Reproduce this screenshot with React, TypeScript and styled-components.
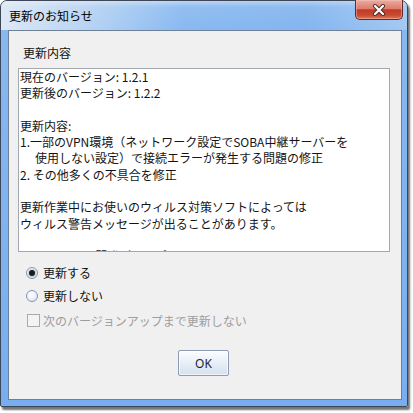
import React from "react";
import styled, { createGlobalStyle } from "styled-components";

const GlobalStyle = createGlobalStyle`
  html, body {
    margin: 0;
    padding: 0;
    background: #ffffff;
  }
  body {
    font-family: "Noto Sans CJK JP", "Noto Sans", sans-serif;
  }
`;

const Page = styled.div`
  width: 413px;
  height: 413px;
  background: #ffffff;
  overflow: hidden;
`;

const Frame = styled.div`
  box-sizing: border-box;
  width: 408px;
  height: 407px;
  display: flex;
  flex-direction: column;
  padding: 0 5px 6px 7px;
  border: 1px solid #3d4757;
  border-radius: 7px 7px 2px 2px;
  background: linear-gradient(
    to bottom,
    #c9ddf4 0px,
    #94c0f1 6px,
    #86b8f1 30px,
    #7fb3ef 60%,
    #78aef0 100%
  );
  box-shadow: 2px 3px 2px rgba(0, 0, 0, 0.55);
`;

const TitleBar = styled.div`
  height: 29px;
  display: flex;
  align-items: center;
  justify-content: space-between;
  margin: 0 -5px 0 -7px;
  padding: 0 5px 0 7px;
  border-radius: 6px 6px 0 0;
  background: linear-gradient(
    to right,
    rgba(235, 240, 246, 0.85) 0%,
    rgba(220, 232, 245, 0.55) 22%,
    rgba(140, 185, 240, 0.2) 45%,
    rgba(120, 170, 235, 0.25) 75%,
    rgba(190, 215, 242, 0.5) 100%
  );
`;

const Title = styled.span`
  font-size: 12px;
  line-height: 16px;
  color: #000000;
  padding-left: 1px;
`;

const CloseButton = styled.div`
  align-self: flex-start;
  box-sizing: border-box;
  width: 48px;
  height: 20px;
  margin: -1px -1px 0 0;
  display: flex;
  align-items: center;
  justify-content: center;
  border: 1px solid #5e2b26;
  border-top: none;
  border-radius: 0 0 5px 5px;
  background: linear-gradient(
    to bottom,
    #e9ada1 0%,
    #dc7d6c 45%,
    #c23a27 52%,
    #c84a33 80%,
    #dc7a5c 100%
  );
  box-shadow: inset 0 0 0 1px rgba(255, 200, 190, 0.45);
`;

const Client = styled.div`
  flex: 1;
  display: flex;
  flex-direction: column;
  border: 1px solid #6f7f95;
  background: #f0f0f0;
`;

const GroupLabel = styled.div`
  margin: 14px 0 0 14px;
  font-size: 12px;
  line-height: 16px;
  color: #111111;
`;

const TextBox = styled.div`
  box-sizing: border-box;
  width: 372px;
  height: 184px;
  margin: 7px 0 0 9px;
  padding: 0 0 0 1px;
  border: 1px solid #a3a9b1;
  background: #ffffff;
  overflow: hidden;
  font-size: 12px;
  line-height: 16.3px;
  color: #141414;
`;

const Line = styled.div<{ $indent?: boolean }>`
  height: 16.3px;
  white-space: nowrap;
  padding-left: ${(p) => (p.$indent ? "15px" : "0")};
`;

const DateText = styled.span`
  margin-left: 52px;
`;

const Options = styled.div`
  margin-top: 9px;
  display: flex;
  flex-direction: column;
`;

const OptionRow = styled.label<{ $disabled?: boolean; $gapTop?: number }>`
  height: 23px;
  margin-top: ${(p) => p.$gapTop ?? 0}px;
  display: flex;
  align-items: center;
  gap: ${(p) => (p.$disabled ? "3px" : "5px")};
  padding-left: 17px;
  font-size: 12px;
  line-height: 16px;
  color: ${(p) => (p.$disabled ? "#9d9d9d" : "#111111")};
`;

const Radio = styled.span<{ $checked?: boolean }>`
  box-sizing: border-box;
  width: 12px;
  height: 12px;
  border-radius: 50%;
  border: 1px solid #8497ae;
  background: radial-gradient(circle at 40% 35%, #ffffff 0%, #eef3f9 45%, #cbd9ea 100%);
  display: flex;
  align-items: center;
  justify-content: center;

  &::after {
    content: "";
    display: ${(p) => (p.$checked ? "block" : "none")};
    width: 6px;
    height: 6px;
    border-radius: 50%;
    background: #1c1c1c;
    box-shadow: 0 0 0 1px rgba(120, 140, 170, 0.35);
  }
`;

const CheckBox = styled.span`
  box-sizing: border-box;
  width: 13px;
  height: 13px;
  margin-left: 1px;
  border: 1px solid #a7abb1;
  background: #f3f3f3;
`;

const ButtonRow = styled.div`
  margin-top: 18px;
  display: flex;
  justify-content: center;
  padding-right: 3px;
`;

const OkButton = styled.button`
  box-sizing: border-box;
  width: 51px;
  height: 26px;
  padding: 0;
  border: 1px solid #8d9cb0;
  border-radius: 2px;
  background: linear-gradient(to bottom, #fbfcfe 0%, #e9f0f8 45%, #d3e1f0 100%);
  box-shadow: inset 0 0 0 1px rgba(255, 255, 255, 0.7);
  font-family: "Noto Sans", "Noto Sans CJK JP", sans-serif;
  font-size: 12px;
  color: #1e2530;
`;

const notes: { text: string; indent?: boolean }[] = [
  { text: "現在のバージョン: 1.2.1" },
  { text: "更新後のバージョン: 1.2.2" },
  { text: "" },
  { text: "更新内容:" },
  { text: "1.一部のVPN環境（ネットワーク設定でSOBA中継サーバーを" },
  { text: "使用しない設定）で接続エラーが発生する問題の修正", indent: true },
  { text: "2. その他多くの不具合を修正" },
  { text: "" },
  { text: "更新作業中にお使いのウィルス対策ソフトによっては" },
  { text: "ウィルス警告メッセージが出ることがあります。" },
  { text: "" },
];

export default function App() {
  return (
    <>
      <GlobalStyle />
      <Page>
        <Frame>
          <TitleBar>
            <Title>更新のお知らせ</Title>
            <CloseButton>
              <svg width="14" height="12" viewBox="0 0 14 12">
                <path d="M3 2 L11 10 M11 2 L3 10" stroke="#4a2a28" strokeWidth="4" strokeLinecap="round" />
                <path d="M3 2 L11 10 M11 2 L3 10" stroke="#ffffff" strokeWidth="2.2" strokeLinecap="round" />
              </svg>
            </CloseButton>
          </TitleBar>
          <Client>
            <GroupLabel>更新内容</GroupLabel>
            <TextBox>
              {notes.map((n, i) => (
                <Line key={i} $indent={n.indent}>
                  {n.text}
                </Line>
              ))}
              <Line>
                SOBA-mizuki 開発グループ<DateText>2012/2/21</DateText>
              </Line>
            </TextBox>
            <Options>
              <OptionRow>
                <Radio $checked />
                更新する
              </OptionRow>
              <OptionRow>
                <Radio />
                更新しない
              </OptionRow>
              <OptionRow $disabled $gapTop={2}>
                <CheckBox />
                次のバージョンアップまで更新しない
              </OptionRow>
            </Options>
            <ButtonRow>
              <OkButton>OK</OkButton>
            </ButtonRow>
          </Client>
        </Frame>
      </Page>
    </>
  );
}
